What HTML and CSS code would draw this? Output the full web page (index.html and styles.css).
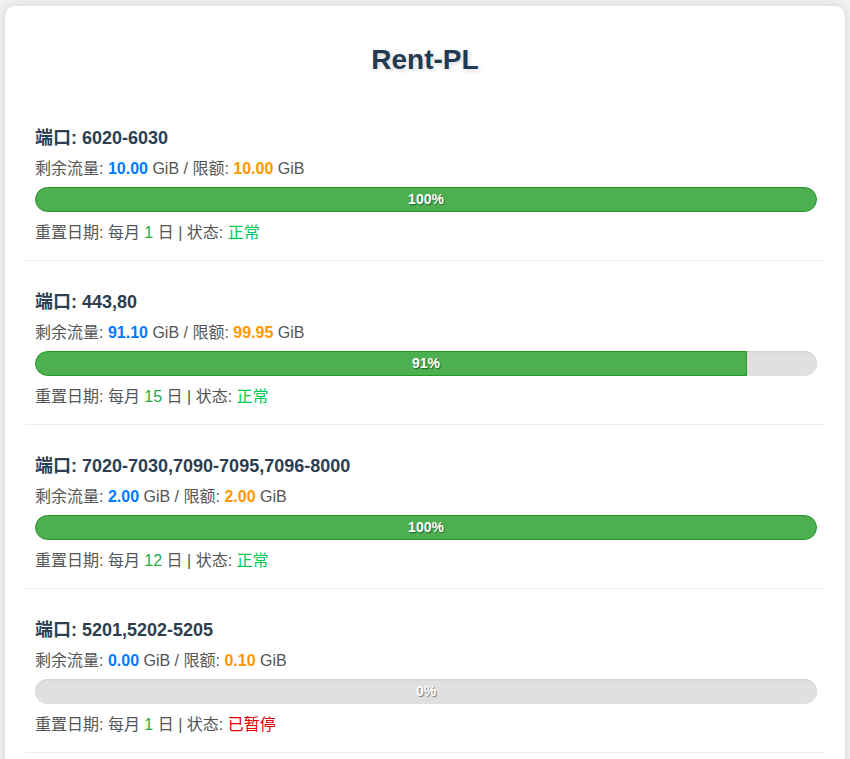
FILE: index.html
```html
<!DOCTYPE html>
<html lang="zh-CN">
<head>
<meta charset="utf-8">
<title>Rent-PL</title>
<link rel="stylesheet" href="styles.css">
</head>
<body>
<div class="card">
  <h1 class="title">Rent-PL</h1>

  <div class="item">
    <h3 class="port">端口: 6020-6030</h3>
    <p class="line">剩余流量: <span class="remain">10.00</span> GiB / 限额: <span class="limit">10.00</span> GiB</p>
    <div class="bar"><div class="fill full" style="width:100%"></div><span class="pct">100%</span></div>
    <p class="line">重置日期: 每月 <span class="day">1</span> 日 | 状态: <span class="ok">正常</span></p>
  </div>

  <div class="item">
    <h3 class="port">端口: 443,80</h3>
    <p class="line">剩余流量: <span class="remain">91.10</span> GiB / 限额: <span class="limit">99.95</span> GiB</p>
    <div class="bar"><div class="fill" style="width:91%"></div><span class="pct">91%</span></div>
    <p class="line">重置日期: 每月 <span class="day">15</span> 日 | 状态: <span class="ok">正常</span></p>
  </div>

  <div class="item">
    <h3 class="port">端口: 7020-7030,7090-7095,7096-8000</h3>
    <p class="line">剩余流量: <span class="remain">2.00</span> GiB / 限额: <span class="limit">2.00</span> GiB</p>
    <div class="bar"><div class="fill full" style="width:100%"></div><span class="pct">100%</span></div>
    <p class="line">重置日期: 每月 <span class="day">12</span> 日 | 状态: <span class="ok">正常</span></p>
  </div>

  <div class="item">
    <h3 class="port">端口: 5201,5202-5205</h3>
    <p class="line">剩余流量: <span class="remain">0.00</span> GiB / 限额: <span class="limit">0.10</span> GiB</p>
    <div class="bar"><span class="pct">0%</span></div>
    <p class="line">重置日期: 每月 <span class="day">1</span> 日 | 状态: <span class="paused">已暂停</span></p>
  </div>
</div>
</body>
</html>
```

FILE: styles.css
```css
html, body {
  margin: 0;
  padding: 0;
}

body {
  background: #f0f0f0;
  padding: 6px 5px;
  font-family: "Liberation Sans", Arial, "Noto Sans CJK SC", sans-serif;
  color: #555;
}

.card {
  width: 840px;
  box-sizing: border-box;
  background: #fff;
  border-radius: 10px;
  box-shadow: 0 0 10px rgba(0, 0, 0, 0.12);
  padding: 20px 20px 30px;
}

.title {
  margin: 18px 0 21px;
  text-align: center;
  font-size: 28px;
  line-height: 32px;
  font-weight: bold;
  color: #1f3a52;
  text-shadow: 2px 2px 4px rgba(0, 0, 0, 0.15);
}

.item {
  padding: 30px 8px 17px 10px;
  border-bottom: 1px solid #eee;
}

.port {
  margin: 0 0 10px;
  font-size: 18px;
  line-height: 22px;
  font-weight: bold;
  color: #2c3e50;
}

.line {
  margin: 0;
  font-size: 16px;
  line-height: 20px;
  color: #555;
}

.remain {
  color: #007bff;
  font-weight: bold;
}

.limit {
  color: #ff9800;
  font-weight: bold;
}

.day {
  color: #28a745;
}

.ok {
  color: #00c853;
}

.paused {
  color: #dd0000;
}

.bar {
  position: relative;
  height: 25px;
  margin: 8px 0 11px;
  background: #e0e0e0;
  border-radius: 13px;
  overflow: hidden;
  box-shadow: inset 0 1px 2px rgba(0, 0, 0, 0.08);
}

.fill {
  height: 100%;
  box-sizing: border-box;
  background: #4caf50;
  border: 1px solid #1f9a26;
  border-radius: 13px 0 0 13px;
}

.fill.full {
  border-radius: 13px;
}

.pct {
  position: absolute;
  left: 0;
  right: 0;
  top: 0;
  bottom: 0;
  text-align: center;
  font-size: 14px;
  line-height: 25px;
  font-weight: bold;
  color: #fff;
  text-shadow: 1px 1px 1px rgba(0, 0, 0, 0.45);
}
```
